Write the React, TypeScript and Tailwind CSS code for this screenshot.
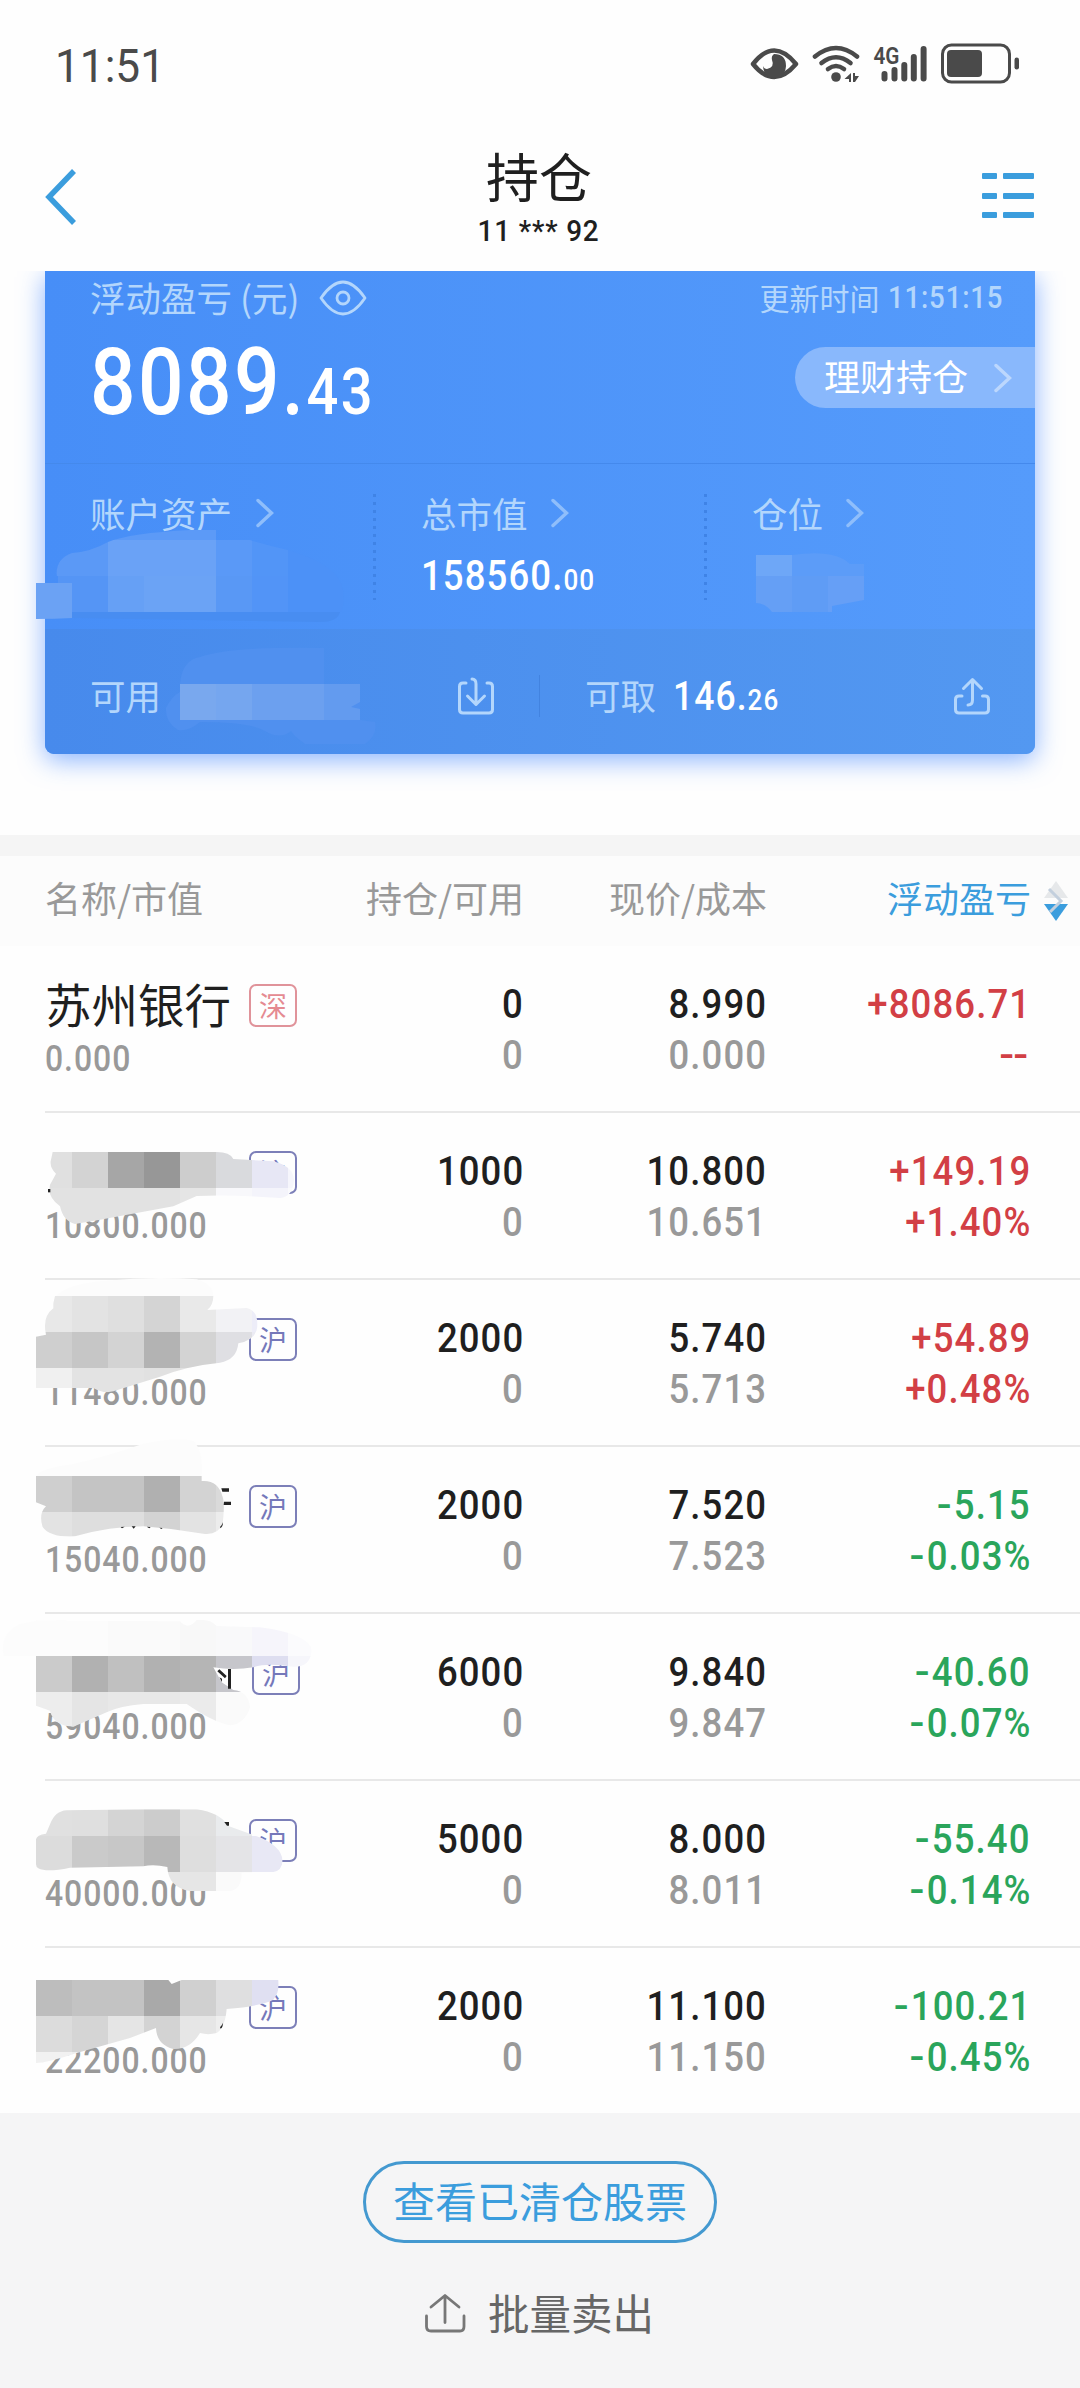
import { ReactNode } from 'react'
import { clsx } from 'clsx'

type Tone = 'up' | 'down'

interface Cell {
  x: number
  y: number
  h: number
  fill: string
}

interface Mask {
  clip: string
  cells: Cell[]
  haze?: string
  strokes?: string
}

interface Holding {
  id: string
  name?: string
  market: '深' | '沪'
  value: string
  amount: string
  available: string
  price: string
  cost: string
  profit: string
  ratio: string
  tone: Tone
  wideName?: boolean
  mask?: Mask
}

// One row of mosaic blocks, 108 units wide each (36px at the 1/3 scale of the mask)
function blocks(y: number, h: number, fills: string[], start = 108): Cell[] {
  return fills.map((fill, i) => ({ x: start + i * 108, y, h, fill }))
}

const HOLDINGS: Holding[] = [
  {
    id: 'h1',
    name: '苏州银行',
    market: '深',
    value: '0.000',
    amount: '0',
    available: '0',
    price: '8.990',
    cost: '0.000',
    profit: '+8086.71',
    ratio: '--',
    tone: 'up',
  },
  {
    id: 'h2',
    market: '沪',
    value: '10800.000',
    amount: '1000',
    available: '0',
    price: '10.800',
    cost: '10.651',
    profit: '+149.19',
    ratio: '+1.40%',
    tone: 'up',
    mask: {
      clip: 'M152 145 L158 117 H650 Q690 117 700 138 L820 145 Q880 160 882 200 Q880 250 840 255 Q700 245 590 249 L520 280 L300 320 L225 333 Q190 325 180 280 Q140 250 150 215 L168 182 Q150 165 152 145Z',
      cells: [
        ...blocks(117, 108, ['#e0e0e0', '#d3d3d3', '#a6a6a6', '#979797', '#cdcdcd', '#d9dadd', '#e7e7f5', '#f6f6fc']),
        ...blocks(225, 108, ['#e2e2e2', '#e2e2e2', '#e2e2e2', '#e2e2e2', '#e5e5e5', '#f8f8fb', '#f4f4fb', '#fafafd']),
      ],
      strokes: 'M144 228h7v10h-7z',
    },
  },
  {
    id: 'h3',
    market: '沪',
    value: '11480.000',
    amount: '2000',
    available: '0',
    price: '5.740',
    cost: '5.713',
    profit: '+54.89',
    ratio: '+0.48%',
    tone: 'up',
    mask: {
      haze: 'M170 48 Q200 10 320 2 Q460 -12 590 -2 Q640 14 640 48Z',
      clip: 'M160 70 L165 48 H640 Q640 75 622 90 L740 84 Q775 92 772 140 Q768 180 715 190 Q710 240 660 248 Q560 258 480 290 L340 334 Q310 342 280 324 L108 324 V170 L138 164 Q126 110 160 85Z',
      cells: [
        ...blocks(48, 108, ['#e8e8e8', '#e3e3e3', '#dfdfdf', '#d4d4d4', '#e9e9e9', '#f2f2f5', '#ededf8']),
        ...blocks(156, 108, ['#cfcfcf', '#c6c6c6', '#d3d3d3', '#b3b3b3', '#d3d3d3', '#dfdfe3', '#ebebf3']),
        ...blocks(264, 108, ['#f0f0f0', '#e3e3e3', '#e3e3e3', '#e1e1e1', '#e1e1e1']),
      ],
    },
  },
  {
    id: 'h4',
    market: '沪',
    value: '15040.000',
    amount: '2000',
    available: '0',
    price: '7.520',
    cost: '7.523',
    profit: '-5.15',
    ratio: '-0.03%',
    tone: 'down',
    mask: {
      haze: 'M108 87 Q130 62 216 52 Q330 25 430 -10 Q540 -32 580 -18 Q610 10 605 87Z',
      clip: 'M108 87 H605 V102 Q655 98 668 150 Q675 170 668 230 Q655 265 610 260 Q520 245 430 238 Q330 238 225 268 Q150 272 128 240 Q115 200 138 178 L108 166Z',
      cells: [
        ...blocks(87, 108, ['#cfcfcf', '#c4c4c4', '#c4c4c4', '#b0b0b0', '#d3d3d3', '#dadada']),
        ...blocks(195, 108, ['#e3e3e3', '#dedede', '#dedede', '#d3d3d3', '#e3e3e3', '#ececec']),
      ],
      strokes: 'M664 124h23v10h-20zM672 164h21v10h-22zM395 238h12l-6 7zM362 240l12-1-8 5zM440 239l12 1-4 4zM478 242l10 1-4 3zM660 240q7-6 8-14q2 12-6 18z',
    },
  },
  {
    id: 'h5',
    market: '沪',
    value: '59040.000',
    amount: '6000',
    available: '0',
    price: '9.840',
    cost: '9.847',
    profit: '-40.60',
    ratio: '-0.07%',
    tone: 'down',
    wideName: true,
    mask: {
      haze: 'M10 120 Q0 60 60 30 L108 20 L200 18 V126 H10Z',
      clip: 'M108 20 L540 22 Q565 50 590 18 Q630 14 650 36 L780 40 Q930 60 935 110 Q930 160 880 158 Q800 145 760 160 Q700 170 640 160 L665 205 L700 228 Q745 232 750 280 Q735 330 690 334 Q640 325 560 270 H430 Q360 275 320 295 L220 338 Q160 335 150 290 L108 275Z',
      cells: [
        ...blocks(14, 112, ['#fcfcfc', '#fcfcfc', '#fafafa', '#fafafa', '#f8f8f8', '#f9f9fa', '#f6f5fb', '#fbfbfd']),
        ...blocks(126, 108, ['#cbcbcb', '#b1b1b1', '#c0c0c0', '#b1b1b1', '#b5b5b5', '#c6c6cb', '#dedef0', '#f6f6fb']),
        ...blocks(234, 108, ['#ededed', '#e5e5e5', '#e8e8e8', '#e8e8e8', '#ebebeb', '#fafafa']),
      ],
      strokes: 'M684 165h9v59h-9zM652 172l6-6 22 20-5 7zM658 190l8 4v10z',
    },
  },
  {
    id: 'h6',
    market: '沪',
    value: '40000.000',
    amount: '5000',
    available: '0',
    price: '8.000',
    cost: '8.011',
    profit: '-55.40',
    ratio: '-0.14%',
    tone: 'down',
    mask: {
      clip: 'M150 130 Q165 90 200 88 L430 85 H590 Q660 95 685 135 L760 162 Q845 190 848 240 Q845 270 820 273 L725 275 Q725 325 690 330 H570 Q505 320 502 258 Q460 248 430 256 L210 260 Q140 275 115 262 Q108 258 108 250 V175 Q110 162 138 158Z',
      cells: [
        ...blocks(80, 85, ['#e0e0e0', '#dfdfdf', '#d4d4d4', '#cccccc', '#e0e0e0', '#e9ebed']),
        ...blocks(165, 108, ['#dcdcdc', '#cacaca', '#c7c7c7', '#b8b8b8', '#dedede', '#e4e4e7', '#e8e8f5']),
        ...blocks(273, 60, ['#e6e6e6', '#e6e6e6', '#fafafa'], 432),
      ],
      strokes: 'M673 123h14v11h-6z',
    },
  },
  {
    id: 'h7',
    market: '沪',
    value: '22200.000',
    amount: '2000',
    available: '0',
    price: '11.100',
    cost: '11.150',
    profit: '-100.21',
    ratio: '-0.45%',
    tone: 'down',
    mask: {
      clip: 'M108 96 H505 L515 108 L545 96 H835 Q840 130 820 155 Q780 175 680 183 Q675 240 650 255 Q625 262 600 255 Q570 305 520 303 Q470 290 468 240 L390 270 L230 315 Q140 345 108 345Z',
      cells: [
        ...blocks(96, 108, ['#bdbdbd', '#c3c3c3', '#c3c3c3', '#a9a9a9', '#d0d0d0', '#dfdfe0', '#e0e0f2']),
        ...blocks(204, 108, ['#dcdcdc', '#d5d5d5', '#e5e5e5', '#d3d3d3', '#e6e6e6', '#eeeeee']),
        ...blocks(312, 40, ['#f1f1f1', '#eeeeee']),
      ],
      strokes: 'M660 238q7-6 8-14q2 12-6 18z',
    },
  },
]

// Narrow DIN-like figures
function Num({ children, className }: { children: ReactNode; className?: string }) {
  return (
    <span
      className={clsx(
        "inline-block whitespace-nowrap font-['Roboto',sans-serif] font-medium tracking-[0.03em]",
        className
      )}
    >
      {children}
    </span>
  )
}

// Change figures: the minus is drawn a little wider than the font's hyphen
function Signed({ text }: { text: string }) {
  return (
    <Num className="origin-right scale-x-[0.88]">
      {text.split('').map((ch, i) =>
        ch === '-' ? (
          <span key={i} className="mr-[1px] inline-block origin-right scale-x-[1.2]">
            -
          </span>
        ) : (
          ch
        )
      )}
    </Num>
  )
}

function Chevron({ className }: { className?: string }) {
  return (
    <svg className={clsx('h-[30px] w-[18px]', className)} viewBox="0 0 18 30" fill="none" stroke="currentColor" strokeWidth="3.4" strokeLinecap="round">
      <path d="M2 2.5 15.5 15 2 27.5" />
    </svg>
  )
}

function StatusBar() {
  return (
    <div className="flex h-32 items-center justify-between pl-[55px] pr-[60px] text-[#4a4a4a]">
      <span className="inline-block origin-left scale-x-[0.96] pt-[3px] font-['Roboto',sans-serif] text-[46px] leading-none">11:51</span>
      <svg className="h-[42px] w-[270px]" viewBox="0 0 270 42" fill="currentColor">
        {/* eye protection */}
        <path d="M3 21Q24-6 46 21Q24 47 3 21Z" fill="none" stroke="currentColor" strokeWidth="4.500" strokeLinejoin="round" />
        <path d="M24 11q12 0 12 12-1 12-12 12-10 0-11-12 1 3 4 3 8-2 5-9-1-4 2-6z" />
        {/* wifi */}
        <g fill="none" stroke="currentColor" strokeWidth="4.600" strokeLinecap="round">
          <path d="M65 13.500q21-17 42 0" />
          <path d="M71.500 20q14.500-11.500 29 0" />
          <path d="M78 26q8-6 16 0" />
        </g>
        <circle cx="86" cy="34" r="4.800" />
        <path d="M101 30v9h-2v-3h-4.500zM103 30h2v3h4l-4 6h-2z" />
        {/* signal */}
        <text x="123.500" y="21" fontSize="24" fontWeight="600" fontFamily="Roboto, sans-serif" textLength="26" lengthAdjust="spacingAndGlyphs">4G</text>
        <g stroke="currentColor" strokeWidth="6" strokeLinecap="round">
          <path d="M134.500 31v4.500M144.500 27v8.500M154.300 22v13.500M163.800 14v21.500M173.600 6v29.500" />
        </g>
        {/* battery */}
        <rect x="192.500" y="2" width="67" height="37" rx="9" fill="none" stroke="currentColor" strokeWidth="3" />
        <rect x="197" y="7" width="35" height="27" rx="4" />
        <rect x="264.500" y="14.500" width="4.500" height="12" rx="2.250" />
      </svg>
    </div>
  )
}

function NavBar() {
  return (
    <div className="flex h-[143px] items-start justify-between pl-[45px] pr-[46px] text-[#3b9ddd]">
      <svg className="mt-[41px] h-[56px] w-[52px]" viewBox="0 0 52 56" fill="none" stroke="currentColor" strokeWidth="5.500">
        <path d="M29 2 4 28l25 26" />
      </svg>
      <div className="flex flex-col items-center pr-[1px] text-[#1f1f1f]">
        <h1 className="mt-[17px] text-[53px] leading-[60px]">持仓</h1>
        <Num className="mt-[10px] scale-x-[0.93] text-[30px] leading-[32px]">11 *** 92</Num>
      </div>
      <svg className="mt-[44px] h-[48px] w-[52px]" viewBox="0 0 52 48" fill="currentColor">
        <rect y="1" width="15" height="6" rx="1" />
        <rect x="21" y="1" width="31" height="6" rx="1" />
        <rect y="21" width="15" height="6" rx="1" />
        <rect x="21" y="21" width="31" height="6" rx="1" />
        <rect y="40" width="15" height="6" rx="1" />
        <rect x="21" y="40" width="31" height="6" rx="1" />
      </svg>
    </div>
  )
}

function DottedLine() {
  return (
    <svg className="mt-[30px] h-[106px] w-[3px] shrink-0" viewBox="0 0 3 106">
      <path d="M1.500 0v106" stroke="#3f83e6" strokeWidth="3" strokeDasharray="3 5" />
    </svg>
  )
}

// Scribbled-over figures on the blue card, in card coordinates
function CardMasks() {
  return (
    <svg className="pointer-events-none absolute left-0 top-0 h-[483px] w-[990px] overflow-visible" viewBox="45 271 990 483">
      <defs>
        <clipPath id="mask-assets">
          <path d="M36 583H58Q52 560 72 553Q90 552 108 542Q130 533 190 530H216V540H250Q270 546 288 550Q340 565 343 590Q345 610 340 612Q338 622 320 622L72 618Q55 619 36 619Z" />
        </clipPath>
        <clipPath id="mask-position">
          <path d="M756 555H792Q835 549 850 564H864V600L832 606V612H772Q765 603 756 603Z" />
        </clipPath>
      </defs>
      <g clipPath="url(#mask-assets)">
        <rect x="54" y="529" width="54" height="47" fill="#5b99f6" />
        <rect x="108" y="529" width="108" height="11" fill="#5c9af7" />
        <rect x="108" y="540" width="108" height="36" fill="#6aa2f6" />
        <rect x="216" y="540" width="36" height="36" fill="#5a99f7" />
        <rect x="252" y="540" width="36" height="36" fill="#5295f7" />
        <rect x="288" y="540" width="60" height="72" fill="#4c91f7" />
        <rect x="58" y="576" width="50" height="36" fill="#5595f5" />
        <rect x="108" y="576" width="36" height="36" fill="#66a0f5" />
        <rect x="144" y="576" width="72" height="36" fill="#6ba3f5" />
        <rect x="216" y="576" width="36" height="36" fill="#5998f5" />
        <rect x="252" y="576" width="36" height="36" fill="#5294f7" />
        <rect x="72" y="612" width="280" height="12" fill="#488df1" />
        <rect x="36" y="583" width="36" height="37" fill="#6ba2f4" />
      </g>
      <path d="M180 684Q182 660 200 657Q230 646 324 648V684H360V720L375 722Q378 735 365 744H305Q294 736 291 731Q280 740 265 731Q250 722 200 722Q188 732 178 730Q165 722 166 708Q172 696 180 692Z" fill="#5090ef" />
      <rect x="180" y="684" width="36" height="36" fill="#79a8ee" />
      <rect x="216" y="684" width="36" height="36" fill="#75a6ef" />
      <rect x="252" y="684" width="72" height="36" fill="#6ca0ef" />
      <path d="M324 684h36v18l-9 5 9 2v11h-36z" fill="#639bef" />
      <g clipPath="url(#mask-position)">
        <rect x="756" y="549" width="36" height="27" fill="#6ea7f7" />
        <rect x="792" y="549" width="72" height="27" fill="#5c9cf8" />
        <rect x="756" y="576" width="36" height="36" fill="#659ff5" />
        <rect x="792" y="576" width="36" height="36" fill="#5f9cf5" />
        <rect x="828" y="576" width="36" height="36" fill="#669ff6" />
      </g>
    </svg>
  )
}

function SummaryCard() {
  return (
    <section className="h-[564px] overflow-hidden px-[45px]">
      <div className="relative h-[483px] rounded-b-[9px] bg-linear-to-r from-[#478ef7] to-[#559bfb] text-[#b3d6fc] shadow-[0_6px_26px_rgba(60,130,255,0.6)]">
        <div className="h-[193px] border-b border-[#4489ec]">
          <div className="flex h-[51px] items-center justify-between pl-[45px] pr-[30px]">
            <div className="flex items-center">
              <span className="text-[35.5px] leading-[50px]">浮动盈亏 (元)</span>
              <svg className="ml-[20px] mt-[2px] h-[36px] w-[48px]" viewBox="0 0 48 36" fill="none" stroke="currentColor" strokeWidth="2.800">
                <path d="M2 18Q24-14 46 18Q24 50 2 18Z" strokeLinejoin="round" />
                <circle cx="24" cy="18" r="6" />
              </svg>
            </div>
            <div className="flex items-center">
              <span className="text-[30px] leading-[50px]">更新时间</span>
              <Num className="-mr-[13px] ml-[9px] mt-[3px] origin-left scale-x-[0.89] text-[31px] leading-[50px]">11:51:15</Num>
            </div>
          </div>
          <div className="flex justify-between pl-[45px] pt-[25px]">
            <Num className="-mt-[2px] origin-left scale-x-[0.862] text-[93px] leading-[75px] text-white">
              8089.<span className="text-[65px]">43</span>
            </Num>
            <div className="flex h-[61px] w-[240px] items-center rounded-l-full bg-[#89b8fc] pl-[29px] text-white">
              <span className="pb-[5px] text-[36px] leading-[56px]">理财持仓</span>
              <Chevron className="ml-[26px] text-[#bcd7fd]" />
            </div>
          </div>
        </div>

        <div className="flex h-[165px]">
          <div className="w-[328px] pl-[45px] pt-[22px]">
            <div className="flex items-center text-[35.5px] leading-[54px]">
              账户资产
              <Chevron className="ml-[24px] text-[#8fbefb]" />
            </div>
          </div>
          <DottedLine />
          <div className="w-[328px] pl-[45px] pt-[22px]">
            <div className="flex items-center text-[35.5px] leading-[54px]">
              总市值
              <Chevron className="ml-[23px] text-[#8fbefb]" />
            </div>
            <Num className="mt-[11px] origin-left scale-x-[0.87] text-[42px] leading-[50px] text-white">
              158560.<span className="text-[30px]">00</span>
            </Num>
          </div>
          <DottedLine />
          <div className="pl-[45px] pt-[22px]">
            <div className="flex items-center text-[35.5px] leading-[54px]">
              仓位
              <Chevron className="ml-[23px] text-[#8fbefb]" />
            </div>
          </div>
        </div>

        <div className="flex h-[125px] items-center rounded-b-[9px] bg-linear-to-r from-[#478aec] to-[#5398f1] pt-[9px]">
          <div className="flex w-[494px] items-center justify-between pl-[45px] pr-[44px]">
            <span className="-mt-[3px] text-[35.5px] leading-[50px]">可用</span>
            <svg className="h-[38px] w-[38px]" viewBox="0 0 38 38" fill="none" stroke="currentColor" strokeWidth="3" strokeLinecap="round" strokeLinejoin="round">
              <path d="M9 6H6Q2.500 6 2.500 9.500V32.500Q2.500 36 6 36H32Q35.500 36 35.500 32.500V9.500Q35.500 6 32 6H30" />
              <path d="M15 2Q19 2 19 7V27.500M10.500 19l8.500 8.500L27.500 19" />
            </svg>
          </div>
          <div className="h-[42px] w-px bg-[#4283e0]" />
          <div className="flex flex-1 items-center pl-[45px] pr-[44px]">
            <span className="-mt-[3px] text-[35.5px] leading-[50px]">可取</span>
            <Num className="ml-[17px] mt-[4px] origin-left scale-x-[0.865] text-[41px] leading-[54px] text-white">
              146.<span className="text-[30px]">26</span>
            </Num>
            <svg className="ml-auto h-[38px] w-[38px]" viewBox="0 0 38 38" fill="none" stroke="currentColor" strokeWidth="3" strokeLinecap="round" strokeLinejoin="round">
              <path d="M9 19H6Q2.500 19 2.500 22.500V32.500Q2.500 36 6 36H32Q35.500 36 35.500 32.500V22.500Q35.500 19 32 19H29.500" />
              <path d="M15 28Q19.500 28 19.500 23V3M10.500 11.500 19.500 2.500 28.500 11.500" />
            </svg>
          </div>
        </div>
        <CardMasks />
      </div>
    </section>
  )
}

function TableHead() {
  return (
    <div className="flex h-[90px] items-start bg-[#fcfcfc] pl-[45px] pt-[16px] text-[36px] leading-[50px] text-[#999]">
      <span className="w-[238px]">名称/市值</span>
      <span className="w-[241px] text-right">持仓/可用</span>
      <span className="w-[243px] text-right">现价/成本</span>
      <span className="w-[264px] text-right text-[#3b9ddd]">浮动盈亏</span>
      <svg className="ml-[13px] mt-[9px] h-[40px] w-[24px]" viewBox="0 0 24 40">
        <path d="M12 0 24 17H0Z" fill="#e6e8ea" />
        <path d="M0 23H24L12 40Z" fill="#3b9ddd" />
        <path d="M5 8 17 20 6 31" fill="none" stroke="#c3cfdd" strokeWidth="3" />
      </svg>
    </div>
  )
}

function MaskLayer({ id, mask }: { id: string; mask: Mask }) {
  return (
    <svg className="pointer-events-none absolute left-0 top-0 h-[167px] w-[360px] overflow-visible" viewBox="0 0 1080 501">
      <clipPath id={id}>
        <path d={mask.clip} />
      </clipPath>
      {mask.haze && <path d={mask.haze} fill="#fcfcfc" />}
      <g clipPath={`url(#${id})`} shapeRendering="crispEdges">
        {mask.cells.map((c) => (
          <rect key={`${c.x}-${c.y}`} x={c.x} y={c.y} width="108" height={c.h} fill={c.fill} />
        ))}
      </g>
      {mask.strokes && <path d={mask.strokes} fill="#222" />}
    </svg>
  )
}

function HoldingRow({ item }: { item: Holding }) {
  const toneClass = item.tone === 'up' ? 'text-[#d23f45]' : 'text-[#2aa55b]'

  return (
    <div className="relative pl-[45px]">
      <div className="flex h-[167px] border-b-2 border-[#e8e8e8] text-[41.5px] leading-[51px]">
        <div className="w-[238px] pt-[38px]">
          <div className="flex h-[43px] items-center">
            <span className={clsx('h-[43px] shrink-0 text-[46.5px] leading-[38px] text-[#1f1f1f]', item.wideName ? 'w-[207px]' : 'w-[204px]')}>
              {item.name}
            </span>
            <span
              className={clsx(
                'flex h-[43px] w-[48px] shrink-0 items-center justify-center rounded-[7px] border-2 pb-[2px] text-[28px] leading-[36px]',
                item.market === '深' ? 'border-[#e0939a] text-[#e58a91]' : 'border-[#7c7fb8] text-[#7578ba]'
              )}
            >
              {item.market}
            </span>
          </div>
          <Num className="mt-[14px] origin-left scale-x-[0.875] text-[36.5px] leading-[36px] text-[#999]">{item.value}</Num>
        </div>
        <div className="flex w-[241px] flex-col items-end pt-[32px]">
          <Num className="origin-right scale-x-[0.88] text-[#1f1f1f]">{item.amount}</Num>
          <Num className="origin-right scale-x-[0.88] text-[#999]">{item.available}</Num>
        </div>
        <div className="flex w-[243px] flex-col items-end pt-[32px]">
          <Num className="origin-right scale-x-[0.88] text-[#1f1f1f]">{item.price}</Num>
          <Num className="origin-right scale-x-[0.88] text-[#999]">{item.cost}</Num>
        </div>
        <div className={clsx('flex w-[264px] flex-col items-end pt-[32px]', toneClass)}>
          <Signed text={item.profit} />
          <Signed text={item.ratio} />
        </div>
      </div>
      {item.mask && <MaskLayer id={`mask-${item.id}`} mask={item.mask} />}
    </div>
  )
}

function Footer() {
  return (
    <div className="relative -mt-[2px] flex h-[275px] flex-col items-center bg-[#f5f5f6] pt-[48px]">
      <button className="flex h-[82px] w-[354px] items-center justify-center rounded-full border-[3px] border-[#4499d0] pb-[4px] text-[42px] leading-[70px] text-[#3b9ddd]">
        <span className="whitespace-nowrap">查看已清仓股票</span>
      </button>
      <button className="mt-[37px] flex items-center pr-[2px] text-[41.5px] leading-[64px] text-[#666]">
        <svg className="mr-[22px] mt-[2px] h-[40px] w-[42px]" viewBox="0 0 42 40" fill="none" stroke="#777" strokeWidth="2.800" strokeLinecap="round" strokeLinejoin="round">
          <path d="M2.500 23V33.500Q2.500 38 7 38H36Q40 38 40 33.500V23" />
          <path d="M21 29.500V3M7 14 21 2.500 35 14" />
        </svg>
        批量卖出
      </button>
    </div>
  )
}

export default function App() {
  return (
    <main className="h-[2388px] w-[1080px] overflow-hidden bg-[#fefefe] font-['Noto_Sans_CJK_SC',sans-serif]">
      <StatusBar />
      <NavBar />
      <SummaryCard />
      <div className="h-[21px] bg-[#f5f5f5]" />
      <TableHead />
      {HOLDINGS.map((item) => (
        <HoldingRow key={item.id} item={item} />
      ))}
      <Footer />
    </main>
  )
}
